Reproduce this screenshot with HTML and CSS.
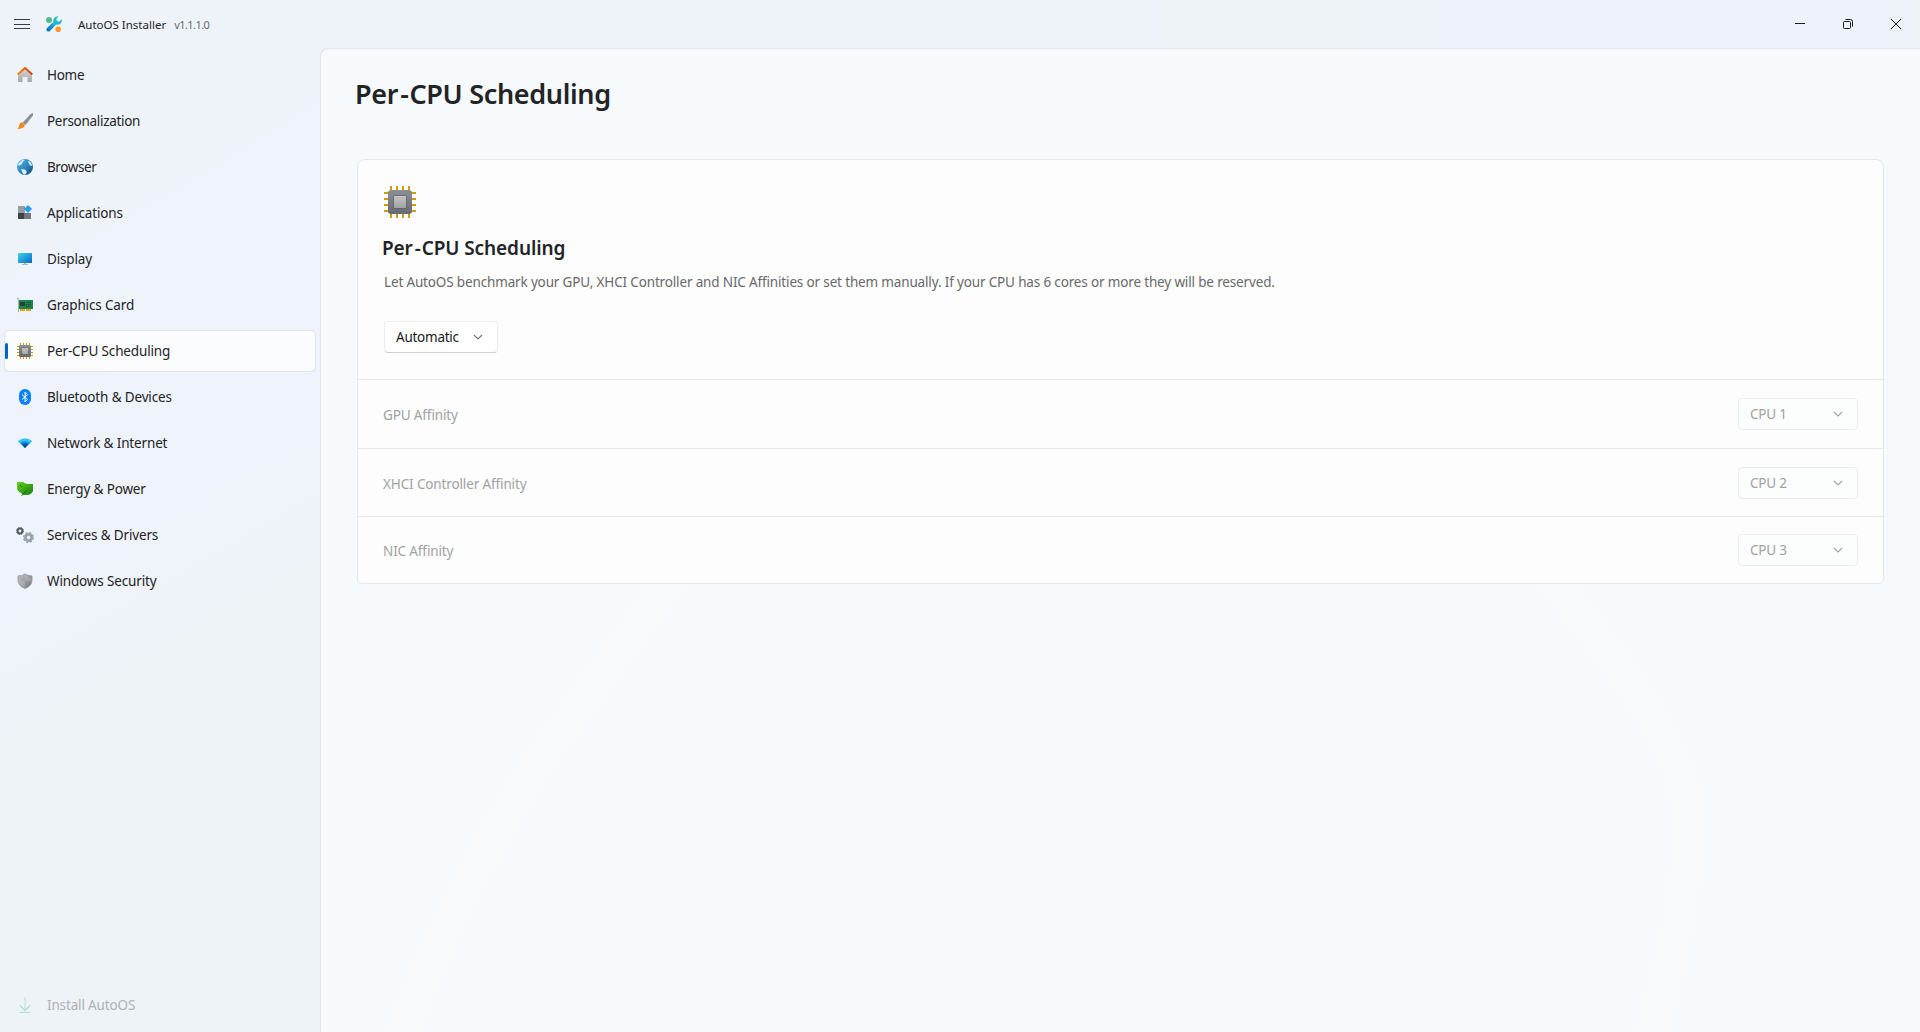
FILE: index.html
```html
<!DOCTYPE html>
<html lang="en">
<head>
<meta charset="utf-8">
<title>AutoOS Installer</title>
<link rel="stylesheet" href="styles.css">
</head>
<body>
<svg class="defs" width="0" height="0" aria-hidden="true">
  <defs>
    <linearGradient id="chipBody" x1="0" y1="0" x2="0" y2="1"><stop offset="0" stop-color="#889096"/><stop offset="1" stop-color="#666a70"/></linearGradient>
    <linearGradient id="chipCore" x1="0" y1="0" x2="0" y2="1"><stop offset="0" stop-color="#c4c4c4"/><stop offset="1" stop-color="#a4a4a4"/></linearGradient>
    <linearGradient id="wrench" x1="1" y1="0" x2="0" y2="1"><stop offset="0" stop-color="#35d7d0"/><stop offset=".5" stop-color="#159bc6"/><stop offset="1" stop-color="#0878c8"/></linearGradient>
    <linearGradient id="roof" x1="0" y1="0" x2="1" y2="0"><stop offset="0" stop-color="#f58a1c"/><stop offset="1" stop-color="#d1420c"/></linearGradient>
    <linearGradient id="wall" x1="0" y1="0" x2="0" y2="1"><stop offset="0" stop-color="#dcdcdc"/><stop offset="1" stop-color="#a6a6a6"/></linearGradient>
    <linearGradient id="globe" x1="0" y1="0" x2="1" y2="1"><stop offset="0" stop-color="#52b5e8"/><stop offset=".55" stop-color="#3084ba"/><stop offset="1" stop-color="#123e68"/></linearGradient>
    <linearGradient id="screen" x1="0" y1="0" x2="1" y2="1"><stop offset="0" stop-color="#38d6ee"/><stop offset="1" stop-color="#0b68c4"/></linearGradient>
    <linearGradient id="leaf" x1="0" y1="0" x2="1" y2="1"><stop offset="0" stop-color="#64cf1a"/><stop offset="1" stop-color="#178017"/></linearGradient>
    <linearGradient id="shield" x1="0" y1="0" x2="1" y2="1"><stop offset="0" stop-color="#c0c4c7"/><stop offset="1" stop-color="#70747a"/></linearGradient>
    <symbol id="chip" viewBox="0 0 32 32">
      <path d="M7 0v32M13 0v32M19 0v32M25 0v32M0 7h32M0 13h32M0 19h32M0 25h32" stroke="#d49a0c" stroke-width="2"/>
      <rect x="4" y="4" width="24" height="24" rx="3" fill="url(#chipBody)"/>
      <rect x="9.500" y="9.500" width="13" height="13" fill="#5b5f63"/>
      <rect x="10" y="10" width="12" height="12" fill="url(#chipCore)"/>
    </symbol>
  </defs>
</svg>
<div class="window">
  <header class="titlebar">
    <svg class="burger" width="16" height="12" viewBox="0 0 16 12"><path d="M0 1.500h16M0 6.500h16M0 10.500h16" stroke="#3a3c42" stroke-width="1"/></svg>
    <svg class="logo" width="16" height="16" viewBox="0 0 16 16">
      <circle cx="3" cy="4" r="3" fill="#51bd86"/><circle cx="12.200" cy="13.200" r="2.800" fill="#ff9a26"/>
      <path d="M2.500 13.500 9.800 6.200" stroke="url(#wrench)" stroke-width="4" stroke-linecap="round"/>
      <path d="M12.600.3A4.500 4.500 0 0 0 7.600 6l2.800 2.600A4.500 4.500 0 0 0 15.800 3.300l-2.600 2.300-2.600-.3-.3-2.400Z" fill="#22b8cc"/>
    </svg>
    <span class="app-name">AutoOS Installer</span>
    <span class="version">v1.1.1.0</span>
    <div class="caption-buttons">
      <svg width="48" height="48" viewBox="0 0 48 48"><path d="M19 23.500h10" stroke="#191919"/></svg>
      <svg width="48" height="48" viewBox="0 0 48 48" fill="none" stroke="#191919"><rect x="19.500" y="21.500" width="7" height="7" rx="1"/><path d="M21.500 19.500h5q2 0 2 2v5"/></svg>
      <svg width="48" height="48" viewBox="0 0 48 48"><path d="m19 19 10 10M29 19l-10 10" stroke="#191919"/></svg>
    </div>
  </header>
  <nav class="sidebar">
    <a class="item"><svg viewBox="0 0 16 16"><path d="M1 7 8 1l7 6v7q0 1-1 1h-3.500v-5h-5v5H2q-1 0-1-1Z" fill="url(#wall)"/><path d="M.7 7.500 8 1l7.300 6.500" fill="none" stroke="url(#roof)" stroke-width="2.200"/></svg><span class="tight">Home</span></a>
    <a class="item"><svg viewBox="0 0 16 16"><path d="M16 0v2.500L8.500 12 5.800 9.500 13.500 1Z" fill="#8b9198"/><path d="M5.300 9.300 8 12Q7 16 0 16q1.700-1 2-3.500.5-3 3.300-3.200Z" fill="#f8871c"/></svg><span class="tight">Personalization</span></a>
    <a class="item"><svg viewBox="0 0 16 16"><circle cx="8" cy="8" r="8" fill="url(#globe)"/><path d="M1 5 5.500.5 8 1 5.500 3 5 5 1.500 7ZM4 10l4 .500L10 13l-2 2.800-2-.8ZM11 2l2 .5 2.500 4-1.500.5-2-2Z" fill="#cfeefa"/></svg><span class="tighter">Browser</span></a>
    <a class="item"><svg viewBox="0 0 16 16"><path d="M1 1h7v7H1Z" fill="#969da4"/><path d="M1 8h6v6H1Z" fill="#3f4246"/><path d="M7 8h7v6H7Z" fill="#737980"/><path d="M11 0 15 4l-4 4-4-4Z" fill="#209fec"/></svg><span>Applications</span></a>
    <a class="item"><svg viewBox="0 0 16 16"><path d="M7 12h2v1h2v1H5v-1h2Z" fill="#aeb5bb"/><rect x="1" y="2" width="14" height="10" rx=".5" fill="url(#screen)"/></svg><span>Display</span></a>
    <a class="item"><svg viewBox="0 0 16 16"><path d="M0 1.500h1.500V15" fill="none" stroke="#a8acb0"/><path d="M2 3h14v9H2Z" fill="#16894b"/><path d="M3 5h5v4H3Z" fill="#2c3c3b"/><path d="M9 5.500h5M9 7.500h5M9 9.500h5" stroke="#273e32" stroke-dasharray="1.300 .5"/><path d="M3 12h5v2H3ZM9 12h5v2H9Z" fill="#e9a30c"/></svg><span>Graphics Card</span></a>
    <a class="item selected"><svg viewBox="0 0 16 16"><use href="#chip" width="16" height="16"/></svg><span>Per-CPU Scheduling</span></a>
    <a class="item"><svg viewBox="0 0 16 16"><rect x="2" width="12" height="16" rx="6" fill="#0782fa"/><path d="m5 5.500 5.500 5L8 13V3l2.500 2.500L5 10.500" fill="none" stroke="#fff"/></svg><span>Bluetooth &amp; Devices</span></a>
    <a class="item"><svg viewBox="0 0 16 16"><path d="M.7 6.200Q8 .1 15.300 6.200L8 13Z" fill="#36c7f1"/><path d="M3.200 8q4.800-3.500 9.600 0L8 13Z" fill="#128bdd"/><path d="M5 9.500q3-1.800 6 0L8 13Z" fill="#11509d"/></svg><span>Network &amp; Internet</span></a>
    <a class="item"><svg viewBox="0 0 16 16"><path d="M0 1h6q2 2 5 2h5v7q-2 4-6 4H6q-1-2-3-2.500Q0 10 0 6Z" fill="url(#leaf)"/><path d="m4.500 14.800 6-6M3 4l2 2" stroke="#17600f"/></svg><span>Energy &amp; Power</span></a>
    <a class="item"><svg class="gears" viewBox="0 0 18 16"><circle cx="4" cy="4" r="2.400" fill="none" stroke="#555b62" stroke-width="2"/><circle cx="4" cy="4" r="3.500" fill="none" stroke="#555b62" stroke-dasharray="1.400 1.350"/><circle cx="12.500" cy="10.500" r="3.200" fill="none" stroke="#9aa2aa" stroke-width="2.800"/><circle cx="12.500" cy="10.500" r="4.900" fill="none" stroke="#9aa2aa" stroke-width="1.300" stroke-dasharray="2.200 1.650"/></svg><span>Services &amp; Drivers</span></a>
    <a class="item"><svg viewBox="0 0 16 16"><path d="M8 1q3 2 7 2v4q0 6-7 8.500Q1 13 1 7V3q4 0 7-2Z" fill="url(#shield)"/><path d="M8 1v14.500Q1 13 1 8h14V7" fill="#fff" opacity=".15"/><path d="M8 1q3 2 7 2v4q0 6-7 8.500Q1 13 1 7V3q4 0 7-2Z" fill="none" stroke="#8f9498" stroke-width=".8"/></svg><span>Windows Security</span></a>
    <a class="item install"><svg viewBox="0 0 16 16" fill="none" stroke="#a9e0dc"><path d="M8 0v13" stroke="#cbebe6" stroke-width="1.700"/><path d="m3 8.500 5 5 5-5" stroke-width="1.300"/><path d="M2.500 15.500h11"/></svg><span>Install AutoOS</span></a>
  </nav>
  <main class="content">
    <svg class="backdrop" width="1599" height="983" viewBox="0 0 1599 983" aria-hidden="true"><path d="M60 1030 81 983Q135 842 219 711L347 534 450 400H1120L1236 534 1305 628Q1335 670 1353 711T1366 794Q1364 870 1330 983L1315 1030Z"/></svg>
    <h1><span>Per</span><span class="hyphen">-</span><span>CPU Scheduling</span></h1>
    <section class="card">
      <div class="intro">
        <svg class="chip-large" width="32" height="32"><use href="#chip"/></svg>
        <h2><span>Per</span><span class="hyphen">-</span><span>CPU Scheduling</span></h2>
        <p>Let AutoOS benchmark your GPU, XHCI Controller and NIC Affinities or set them manually. If your CPU has 6 cores or more they will be reserved.</p>
        <div class="select mode"><span>Automatic</span><svg width="10" height="6" viewBox="0 0 10 6"><path d="m1 1 4 4 4-4"/></svg></div>
      </div>
      <div class="row first"><span class="label">GPU Affinity</span><div class="select"><span>CPU 1</span><svg width="10" height="6" viewBox="0 0 10 6"><path d="m1 1 4 4 4-4"/></svg></div></div>
      <div class="row"><span class="label">XHCI Controller Affinity</span><div class="select"><span>CPU 2</span><svg width="10" height="6" viewBox="0 0 10 6"><path d="m1 1 4 4 4-4"/></svg></div></div>
      <div class="row last"><span class="label">NIC Affinity</span><div class="select"><span>CPU 3</span><svg width="10" height="6" viewBox="0 0 10 6"><path d="m1 1 4 4 4-4"/></svg></div></div>
    </section>
  </main>
</div>
</body>
</html>
```
FILE: styles.css
```css
* { box-sizing: border-box; }
body {
  margin: 0;
  font: 13.5px/20px "Noto Sans", "Open Sans", sans-serif;
  letter-spacing: -0.15px;
  color: #222325;
}
.defs { position: absolute; }
.window {
  width: 1920px;
  height: 1032px;
  display: grid;
  grid-template: 48px 984px / 320px 1600px;
  background:
    linear-gradient(150deg, #eef3fa 0%, #eff3fb 48%, #eef3f7 68%, #eef3f7 100%) 0 0 / 320px 100% no-repeat,
    linear-gradient(90deg, #eef3fa 55%, #eef3f8 62%, #eef3f8 70%, #eef2fa 76%, #eef2fa 98%, #eef3f8);
  overflow: hidden;
}
.titlebar {
  grid-column: 1 / 3;
  display: flex;
  align-items: center;
  padding-left: 14px;
}
.burger { margin-right: 16px; }
.logo { margin-right: 16px; }
.app-name { font-size: 11.5px; letter-spacing: 0; padding-top: 2px; }
.version { font-size: 11px; color: #696b70; margin-left: 8px; letter-spacing: -0.55px; padding-top: 2px; }
.caption-buttons { margin-left: auto; display: flex; }
.sidebar {
  display: flex;
  flex-direction: column;
  gap: 4px;
  padding: 6px 4px;
}
.item {
  height: 42px;
  display: flex;
  align-items: center;
  padding-left: 13px;
  border-radius: 5px;
  white-space: nowrap;
}
.item svg { width: 16px; height: 16px; margin-right: 14px; flex: none; }
.item svg.gears { width: 18px; margin-left: -1px; margin-right: 13px; }
.tight { letter-spacing: -0.3px; }
.tighter { letter-spacing: -0.4px; }
.selected {
  position: relative;
  background: #fbfcfe;
  box-shadow: inset 0 0 0 1px #e2e6ea, inset 0 -2px 0 -1px #c5c9cc;
}
.selected::before {
  content: "";
  position: absolute;
  left: 1px;
  top: 13px;
  width: 3px;
  height: 16px;
  border-radius: 2px;
  background: #0067c0;
}
.install { margin-top: auto; color: #aeb2b6; }
.content {
  position: relative;
  isolation: isolate;
  overflow: hidden;
  border-top: 1px solid #e2e5e9;
  border-left: 1px solid #e2e5e9;
  border-top-left-radius: 8px;
  background: #f6fafd;
  padding: 25px 37px 0 36px;
}
.backdrop { position: absolute; left: 0; top: 0; z-index: -1; }
.backdrop path { fill: #f8f9fd; stroke: #f8fafc; stroke-width: 34px; }
h1, h2 { margin: 0; font-weight: 600; white-space: nowrap; }
h1 { font-size: 27px; line-height: 40px; letter-spacing: -0.33px; margin-left: -2px; }
h2 { font-size: 19px; line-height: 28px; letter-spacing: -0.1px; margin: 16px 0 0 -2px; }
.hyphen { margin: 0 1px 0 2px; }
.card {
  width: 1527px;
  height: 425px;
  margin-top: 45px;
  border: 1px solid #e5e8eb;
  border-radius: 8px 8px 5px 5px;
  background: #fdfdfe;
}
.intro { height: 219px; padding: 26px 26px 0; }
.chip-large { display: block; }
p { margin: 10px 0 29px; line-height: 20px; color: #68696a; white-space: nowrap; letter-spacing: -0.154px; }
.select {
  width: 120px;
  height: 32px;
  display: flex;
  align-items: center;
  justify-content: space-between;
  padding: 0 14px 0 11px;
  border: 1px solid #eceeee;
  border-radius: 4px;
  background: #fcfdfd;
  color: #a0a2a3;
  letter-spacing: -0.2px;
}
.select svg path { fill: none; stroke: currentColor; stroke-width: 1.1px; }
.mode { width: 114px; background: #fff; color: #1b1b1b; border-bottom-color: #cfd1d2; letter-spacing: -0.25px; }
.mode svg { color: #747474; }
.row {
  height: 68px;
  display: flex;
  align-items: center;
  justify-content: space-between;
  padding: 0 25px;
  border-top: 1px solid #e5e8eb;
  color: #a0a2a3;
}
.label { padding-top: 2px; letter-spacing: -0.13px; }
.first { height: 69px; }
.last { height: 67px; }
```
